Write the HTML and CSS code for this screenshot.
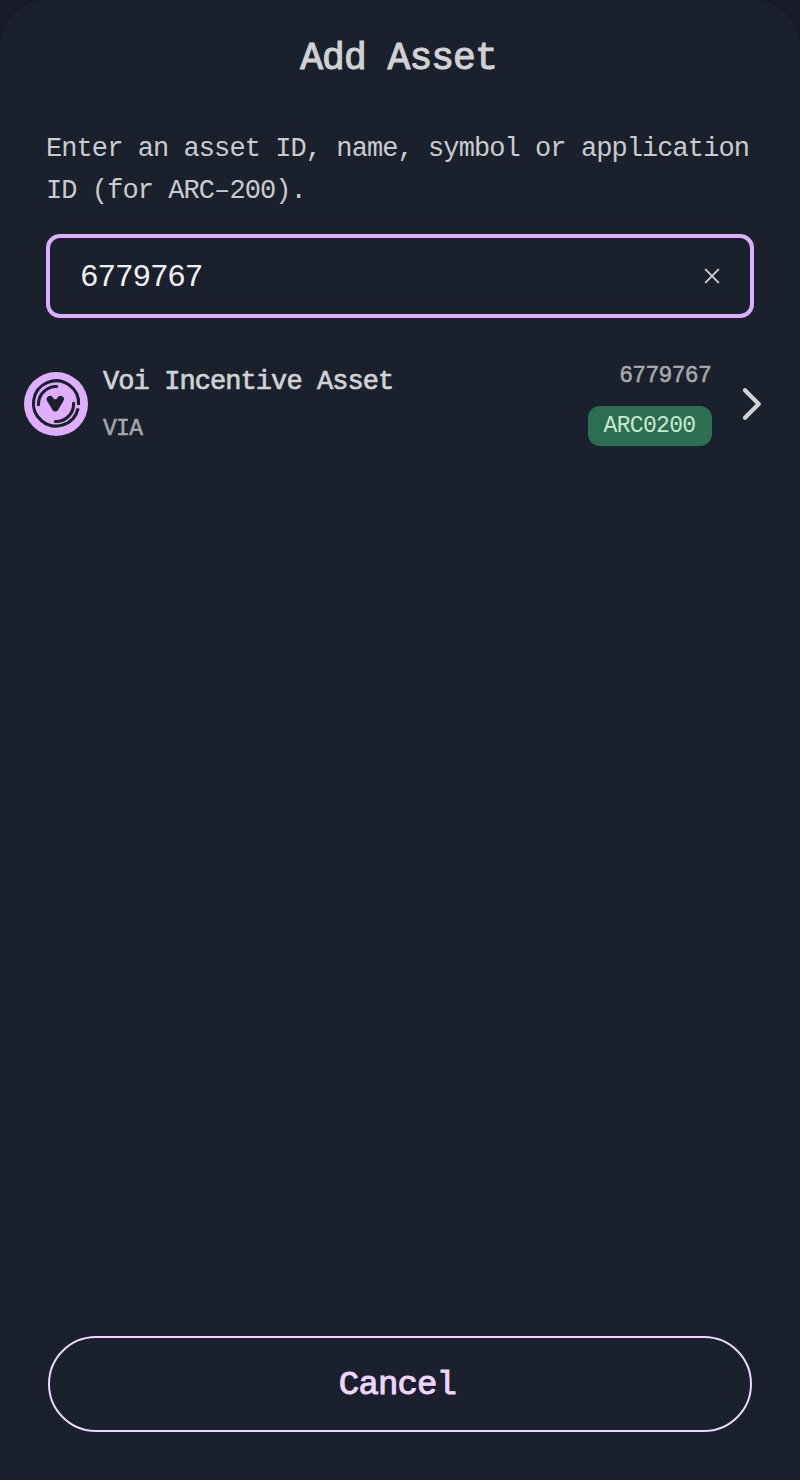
FILE: index.html
```html
<!DOCTYPE html>
<html lang="en">
<head>
<meta charset="utf-8">
<title>Add Asset</title>
<link rel="stylesheet" href="styles.css">
</head>
<body>
<main class="sheet">
  <h1 class="title">Add Asset</h1>
  <p class="hint">Enter an asset ID, name, symbol or application ID (for ARC–200).</p>
  <div class="field">
    <span class="value">6779767</span>
    <svg class="clear" viewBox="0 0 16 16"><path d="M1.2 1.2 14.8 14.8M14.8 1.2 1.2 14.8"/></svg>
  </div>
  <div class="asset">
    <svg class="logo" viewBox="0 0 64 64">
      <circle class="disc" cx="32" cy="32" r="32"/>
      <path class="ring outer" d="M54.6 33A22.6 22.6 0 1 0 54.1 36.4"/>
      <path class="ring" d="M14.5 32.6A17.7 17.7 0 0 1 32.7 14.5M49.6 31.2A17.7 17.7 0 0 1 31.4 49.5"/>
      <path class="heart" d="M26.1 27.2 31.3 36 36.5 27.2"/>
    </svg>
    <div class="names">
      <span class="name">Voi Incentive Asset</span>
      <span class="small">VIA</span>
    </div>
    <div class="meta">
      <span class="small">6779767</span>
      <span class="badge">ARC0200</span>
    </div>
    <svg class="chevron" viewBox="0 0 20 32"><path d="M3 2.3 16.7 16 3 29.7"/></svg>
  </div>
  <button class="cancel">Cancel</button>
</main>
</body>
</html>
```
FILE: styles.css
```css
* { box-sizing: border-box; }
body {
  margin: 0;
  background: #1a1d29;
  font-family: "Liberation Mono", monospace;
  color: #d0d2d5;
}
.sheet {
  height: 1478px;
  padding: 35px 0 46px;
  display: flex;
  flex-direction: column;
  background: #1b212c;
  border-radius: 46px 46px 0 0;
  box-shadow: 0 0 7px #131722;
}
.title {
  margin: 0;
  padding-right: 3px;
  text-align: center;
  font-size: 38px;
  line-height: 48px;
  font-weight: 400;
  letter-spacing: -0.96px;
  -webkit-text-stroke: 1.1px;
}
.hint {
  margin: 45px 40px 0 46px;
  font-size: 27px;
  line-height: 42px;
  letter-spacing: -0.92px;
  color: #c9cbce;
}
.field {
  margin: 22px 46px 0;
  height: 84px;
  padding: 0 30px;
  border: 4px solid #dfaeff;
  border-radius: 14px;
  display: flex;
  align-items: center;
  justify-content: space-between;
}
.value {
  padding-top: 2px;
  font-size: 31px;
  letter-spacing: -1.13px;
  color: #f0f1f2;
}
.clear { width: 16px; height: 16px; }
.clear path { fill: none; stroke: #d0d2d5; stroke-width: 1.7; }
.asset {
  margin-top: 40px;
  height: 92px;
  padding: 0 38px 0 24px;
  display: flex;
  align-items: center;
}
.logo { width: 64px; height: 64px; flex: none; }
.disc { fill: #dfaeff; }
.ring { fill: none; stroke: #1b212c; stroke-width: 3.1; stroke-linecap: round; }
.outer { stroke-linecap: butt; }
.heart {
  fill: #1b212c;
  stroke: #1b212c;
  stroke-width: 6.8;
  stroke-linecap: round;
  stroke-linejoin: round;
}
.names {
  margin-left: 15px;
  display: flex;
  flex-direction: column;
  gap: 13px;
}
.name {
  font-size: 27px;
  line-height: 36px;
  letter-spacing: -0.92px;
  -webkit-text-stroke: 0.7px;
}
.small {
  font-size: 23px;
  line-height: 32px;
  letter-spacing: -0.69px;
  color: #a6a8ad;
  -webkit-text-stroke: 0.5px;
}
.meta {
  margin-left: auto;
  display: flex;
  flex-direction: column;
  align-items: flex-end;
  gap: 14px;
  padding-bottom: 2px;
}
.meta .small { padding: 1px 1px 0 0; line-height: 31px; }
.badge {
  width: 124px;
  height: 40px;
  padding-right: 1px;
  text-align: center;
  border-radius: 12px;
  background: #2c6e52;
  color: #c8e8d0;
  font-size: 23px;
  line-height: 41px;
  letter-spacing: -0.69px;
}
.chevron { width: 20px; height: 32px; margin-left: 30px; flex: none; }
.chevron path {
  fill: none;
  stroke: #d0d2d5;
  stroke-width: 4.2;
  stroke-linecap: round;
  stroke-linejoin: round;
}
.cancel {
  margin: auto 48px 0;
  height: 96px;
  padding: 2px 5px 0 0;
  border: 2px solid #efd5ff;
  border-radius: 48px;
  background: none;
  color: #efd5ff;
  font-family: inherit;
  font-size: 34px;
  letter-spacing: -0.85px;
  -webkit-text-stroke: 1px;
}
```
